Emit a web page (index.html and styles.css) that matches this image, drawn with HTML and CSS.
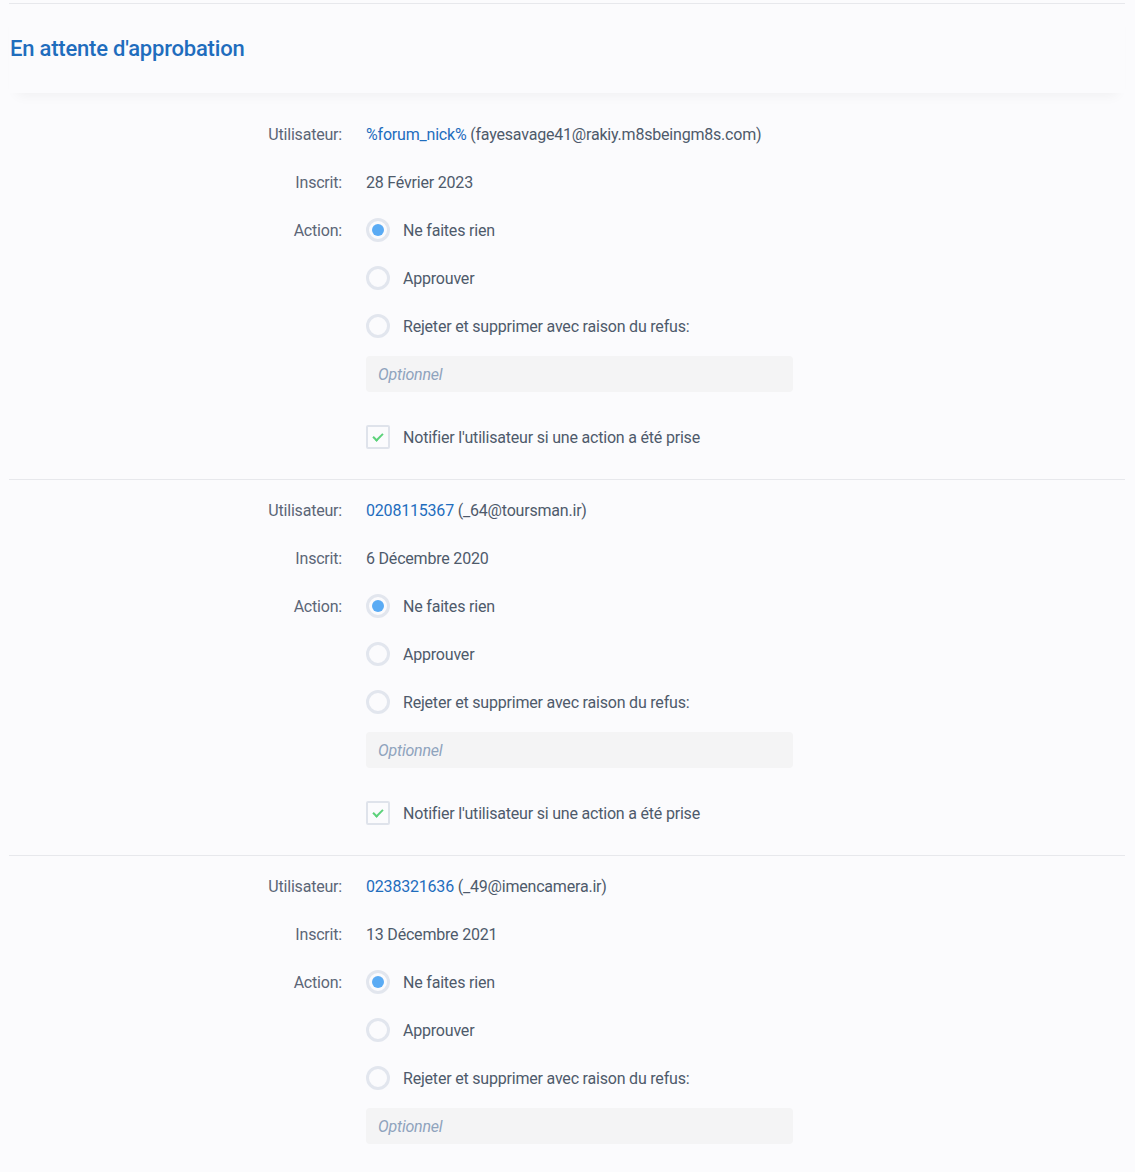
FILE: index.html
```html
<!DOCTYPE html>
<html lang="fr">
<head>
    <meta charset="UTF-8">
    <meta name="viewport" content="width=device-width, initial-scale=1.0">
    <title>En attente d'approbation</title>
    <link rel="stylesheet" href="styles.css">
</head>
<body>
    <div class="panel">
        <div class="panel-head">
            <h2>En attente d'approbation</h2>
        </div>

        <!-- user 1 -->
        <div class="item">
            <div class="row">
                <span class="label">Utilisateur:</span>
                <span class="value"><a href="#">%forum_nick%</a> (fayesavage41@rakiy.m8sbeingm8s.com)</span>
            </div>
            <div class="row">
                <span class="label">Inscrit:</span>
                <span class="value">28 Février 2023</span>
            </div>
            <div class="row">
                <span class="label">Action:</span>
                <label class="option"><input type="radio" name="a1" checked><span class="radio"></span>Ne faites rien</label>
            </div>
            <div class="row">
                <span class="label"></span>
                <label class="option"><input type="radio" name="a1"><span class="radio"></span>Approuver</label>
            </div>
            <div class="row">
                <span class="label"></span>
                <label class="option"><input type="radio" name="a1"><span class="radio"></span>Rejeter et supprimer avec raison du refus:</label>
            </div>
            <div class="row">
                <span class="label"></span>
                <input class="reason" type="text" placeholder="Optionnel">
            </div>
            <div class="row notify">
                <span class="label"></span>
                <label class="option"><input type="checkbox" checked><span class="check"></span>Notifier l'utilisateur si une action a été prise</label>
            </div>
        </div>

        <!-- user 2 -->
        <div class="item">
            <div class="row">
                <span class="label">Utilisateur:</span>
                <span class="value"><a href="#">0208115367</a> (_64@toursman.ir)</span>
            </div>
            <div class="row">
                <span class="label">Inscrit:</span>
                <span class="value">6 Décembre 2020</span>
            </div>
            <div class="row">
                <span class="label">Action:</span>
                <label class="option"><input type="radio" name="a2" checked><span class="radio"></span>Ne faites rien</label>
            </div>
            <div class="row">
                <span class="label"></span>
                <label class="option"><input type="radio" name="a2"><span class="radio"></span>Approuver</label>
            </div>
            <div class="row">
                <span class="label"></span>
                <label class="option"><input type="radio" name="a2"><span class="radio"></span>Rejeter et supprimer avec raison du refus:</label>
            </div>
            <div class="row">
                <span class="label"></span>
                <input class="reason" type="text" placeholder="Optionnel">
            </div>
            <div class="row notify">
                <span class="label"></span>
                <label class="option"><input type="checkbox" checked><span class="check"></span>Notifier l'utilisateur si une action a été prise</label>
            </div>
        </div>

        <!-- user 3 -->
        <div class="item">
            <div class="row">
                <span class="label">Utilisateur:</span>
                <span class="value"><a href="#">0238321636</a> (_49@imencamera.ir)</span>
            </div>
            <div class="row">
                <span class="label">Inscrit:</span>
                <span class="value">13 Décembre 2021</span>
            </div>
            <div class="row">
                <span class="label">Action:</span>
                <label class="option"><input type="radio" name="a3" checked><span class="radio"></span>Ne faites rien</label>
            </div>
            <div class="row">
                <span class="label"></span>
                <label class="option"><input type="radio" name="a3"><span class="radio"></span>Approuver</label>
            </div>
            <div class="row">
                <span class="label"></span>
                <label class="option"><input type="radio" name="a3"><span class="radio"></span>Rejeter et supprimer avec raison du refus:</label>
            </div>
            <div class="row">
                <span class="label"></span>
                <input class="reason" type="text" placeholder="Optionnel">
            </div>
            <div class="row notify">
                <span class="label"></span>
                <label class="option"><input type="checkbox" checked><span class="check"></span>Notifier l'utilisateur si une action a été prise</label>
            </div>
        </div>
    </div>
</body>
</html>
```

FILE: styles.css
```css
body {
    font-family: Roboto, "Noto Sans", Arial, sans-serif;
    font-size: 16px;
    letter-spacing: -0.2px;
    margin: 0;
    padding: 0;
    background-color: #fbfbfd;
    color: #4e5a6b;
}
.panel {
    margin: 3px 10px 0 9px;
}
.panel-head {
    height: 89px;
    border-top: 1px solid #e7e8ec;
    display: flex;
    align-items: center;
    padding: 0 1px;
    box-shadow: 0 10px 12px -8px rgba(0, 0, 0, 0.05);
    margin-bottom: 11px;
}
.panel-head h2 {
    margin: 0;
    font-size: 22px;
    font-weight: 500;
    color: #1f6dbd;
}
.item {
    padding: 6px 0 18px;
    border-bottom: 1px solid #e7e8ec;
}
.row {
    display: grid;
    grid-template-columns: 333px 1fr;
    column-gap: 24px;
    align-items: center;
    height: 48px;
}
.row.notify {
    margin-top: 15px;
}
.label {
    text-align: right;
    color: #5b6677;
}
.value a {
    color: #1f6dbd;
    text-decoration: none;
}
.option {
    display: flex;
    align-items: center;
    gap: 13px;
    cursor: pointer;
}
.option input {
    display: none;
}
.radio {
    width: 24px;
    height: 24px;
    box-sizing: border-box;
    border: 3px solid #e2e6ee;
    border-radius: 50%;
    display: flex;
    align-items: center;
    justify-content: center;
}
.option input:checked + .radio::after {
    content: "";
    width: 12px;
    height: 12px;
    border-radius: 50%;
    background-color: #5aabf4;
}
.check {
    width: 24px;
    height: 24px;
    box-sizing: border-box;
    border: 2px solid #dfe3eb;
    border-radius: 2px;
    position: relative;
}
.option input:checked + .check::after {
    content: "";
    position: absolute;
    left: 7px;
    top: 4px;
    width: 4px;
    height: 8px;
    border: solid #5cd27a;
    border-width: 0 2.5px 2.5px 0;
    transform: rotate(45deg);
}
.reason {
    width: 427px;
    height: 36px;
    box-sizing: border-box;
    border: none;
    border-radius: 4px;
    background-color: #f4f4f5;
    padding: 0 12px;
    font-family: inherit;
    font-size: 16px;
    letter-spacing: -0.2px;
    color: #4e5a6b;
    outline: none;
}
.reason::placeholder {
    color: #8fa3bd;
    font-style: italic;
}
```
